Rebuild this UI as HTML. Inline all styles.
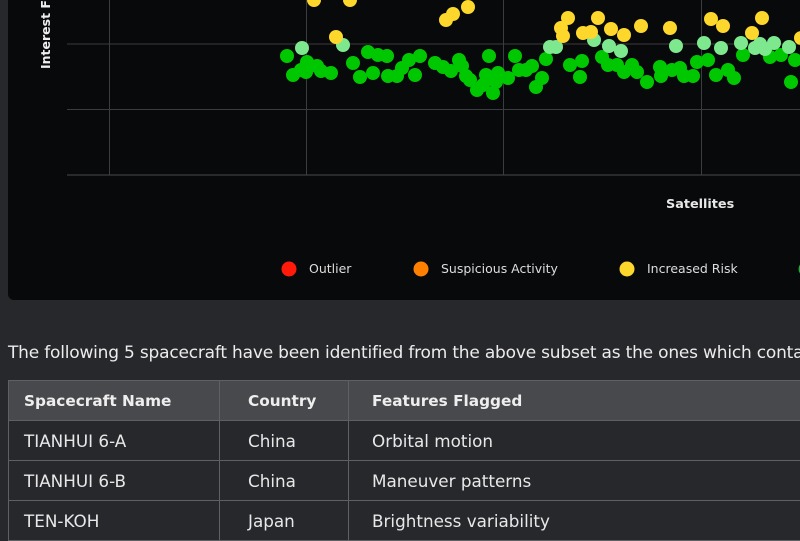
<!DOCTYPE html>
<html><head><meta charset="utf-8"><style>
*{margin:0;padding:0;box-sizing:border-box}
body{width:800px;height:533px;overflow:hidden;background:#27282b;font-family:"DejaVu Sans","Liberation Sans",sans-serif;color:#e8e8e8;position:relative}
.panel{position:absolute;left:8px;top:-10px;width:810px;height:310px;background:#08090b;border-radius:6px}
svg{position:absolute;left:0;top:0}
.p{position:absolute;left:8px;top:343px;font-size:17px;white-space:nowrap;color:#ececec;letter-spacing:-0.2px}
table{position:absolute;left:8px;top:380px;border-collapse:collapse;width:820px;font-size:16.8px}
th,td{border:1px solid #5f6063;height:40px;text-align:left;padding-left:15px;white-space:nowrap}
th{background:#48494c;font-weight:bold;color:#eee;font-size:15.3px}
td{background:#27282b;color:#e8e8e8}
th:first-child,td:first-child{width:211px}
th:nth-child(2),td:nth-child(2){width:129px;padding-left:28px}
th:nth-child(3),td:nth-child(3){padding-left:23px}
</style></head><body>
<div class="panel"></div>
<svg width="800" height="300" viewBox="0 0 800 300">
<g stroke="#3b3c3f" stroke-width="1">
<line x1="67" y1="44" x2="800" y2="44"/><line x1="67" y1="109.5" x2="800" y2="109.5"/><line x1="67" y1="175" x2="800" y2="175" stroke="#4a4b4e"/>
<line x1="109.5" y1="0" x2="109.5" y2="175"/><line x1="306.5" y1="0" x2="306.5" y2="175"/><line x1="503.5" y1="0" x2="503.5" y2="175"/><line x1="701.5" y1="0" x2="701.5" y2="175"/>
</g>
<text transform="translate(50,69) rotate(-90)" font-family="DejaVu Sans,sans-serif" font-weight="bold" font-size="12.5" fill="#eee">Interest F</text>
<text x="666" y="208" font-family="DejaVu Sans,sans-serif" font-weight="bold" font-size="12.8" fill="#e8e8e8">Satellites</text>
<g fill="#00c800">
<circle cx="287" cy="56" r="7"/><circle cx="293" cy="75" r="7"/><circle cx="301" cy="70" r="7"/><circle cx="307" cy="62" r="7"/><circle cx="306" cy="72" r="7"/><circle cx="317" cy="66" r="7"/><circle cx="321" cy="71" r="7"/><circle cx="331" cy="73" r="7"/><circle cx="353" cy="63" r="7"/><circle cx="360" cy="77" r="7"/><circle cx="368" cy="52" r="7"/><circle cx="373" cy="73" r="7"/><circle cx="378" cy="55" r="7"/><circle cx="387" cy="56" r="7"/><circle cx="388" cy="76" r="7"/><circle cx="397" cy="76" r="7"/><circle cx="402" cy="68" r="7"/><circle cx="409" cy="60" r="7"/><circle cx="415" cy="75" r="7"/><circle cx="420" cy="56" r="7"/><circle cx="435" cy="63" r="7"/><circle cx="443" cy="67" r="7"/><circle cx="451" cy="71" r="7"/><circle cx="459" cy="60" r="7"/><circle cx="462" cy="66" r="7"/><circle cx="466" cy="76" r="7"/><circle cx="470" cy="80" r="7"/><circle cx="477" cy="90" r="7"/><circle cx="483" cy="85" r="7"/><circle cx="486" cy="75" r="7"/><circle cx="489" cy="56" r="7"/><circle cx="493" cy="93" r="7"/><circle cx="496" cy="82" r="7"/><circle cx="498" cy="73" r="7"/><circle cx="508" cy="78" r="7"/><circle cx="515" cy="56" r="7"/><circle cx="519" cy="70" r="7"/><circle cx="526" cy="70" r="7"/><circle cx="532" cy="66" r="7"/><circle cx="536" cy="87" r="7"/><circle cx="542" cy="78" r="7"/><circle cx="546" cy="59" r="7"/><circle cx="570" cy="65" r="7"/><circle cx="580" cy="77" r="7"/><circle cx="582" cy="61" r="7"/><circle cx="602" cy="57" r="7"/><circle cx="608" cy="65" r="7"/><circle cx="617" cy="65" r="7"/><circle cx="632" cy="65" r="7"/><circle cx="637" cy="72" r="7"/><circle cx="647" cy="82" r="7"/><circle cx="660" cy="67" r="7"/><circle cx="661" cy="76" r="7"/><circle cx="672" cy="70" r="7"/><circle cx="680" cy="68" r="7"/><circle cx="684" cy="76" r="7"/><circle cx="693" cy="76" r="7"/><circle cx="697" cy="62" r="7"/><circle cx="708" cy="60" r="7"/><circle cx="716" cy="75" r="7"/><circle cx="734" cy="78" r="7"/><circle cx="743" cy="55" r="7"/><circle cx="770" cy="57" r="7"/><circle cx="781" cy="55" r="7"/><circle cx="791" cy="82" r="7"/><circle cx="795" cy="60" r="7"/><circle cx="728" cy="70" r="7"/><circle cx="624" cy="72" r="7"/>
</g>
<g fill="#7ee88f">
<circle cx="302" cy="48" r="7"/><circle cx="343" cy="45" r="7"/><circle cx="550" cy="47" r="7"/><circle cx="556" cy="47" r="7"/><circle cx="594" cy="40" r="7"/><circle cx="609" cy="46" r="7"/><circle cx="621" cy="51" r="7"/><circle cx="676" cy="46" r="7"/><circle cx="704" cy="43" r="7"/><circle cx="721" cy="48" r="7"/><circle cx="741" cy="43" r="7"/><circle cx="755" cy="48" r="7"/><circle cx="765" cy="49" r="7"/><circle cx="774" cy="43" r="7"/><circle cx="789" cy="47" r="7"/><circle cx="760" cy="44" r="7"/>
</g>
<g fill="#fdd72b">
<circle cx="314" cy="0" r="7"/><circle cx="350" cy="0" r="7"/><circle cx="336" cy="37" r="7"/><circle cx="446" cy="20" r="7"/><circle cx="453" cy="14" r="7"/><circle cx="468" cy="7" r="7"/><circle cx="561" cy="28" r="7"/><circle cx="568" cy="18" r="7"/><circle cx="563" cy="36" r="7"/><circle cx="583" cy="33" r="7"/><circle cx="591" cy="32" r="7"/><circle cx="598" cy="18" r="7"/><circle cx="611" cy="29" r="7"/><circle cx="624" cy="35" r="7"/><circle cx="641" cy="26" r="7"/><circle cx="670" cy="28" r="7"/><circle cx="711" cy="19" r="7"/><circle cx="723" cy="26" r="7"/><circle cx="752" cy="33" r="7"/><circle cx="762" cy="18" r="7"/><circle cx="801" cy="38" r="7"/>
</g>
<circle cx="289" cy="269" r="7.5" fill="#ff1a0a"/>
<circle cx="421" cy="269" r="7.5" fill="#ff8000"/>
<circle cx="627" cy="269" r="7.5" fill="#fdd72b"/>
<circle cx="806" cy="269" r="7.5" fill="#22aa33"/>
<g font-family="DejaVu Sans,sans-serif" font-size="12.5" fill="#ddd">
<text x="309" y="273">Outlier</text>
<text x="441" y="273">Suspicious Activity</text>
<text x="647" y="273">Increased Risk</text>
</g>
</svg>
<div class="p">The following 5 spacecraft have been identified from the above subset as the ones which contain</div>
<table>
<tr><th>Spacecraft Name</th><th>Country</th><th>Features Flagged</th></tr>
<tr><td>TIANHUI 6-A</td><td>China</td><td>Orbital motion</td></tr>
<tr><td>TIANHUI 6-B</td><td>China</td><td>Maneuver patterns</td></tr>
<tr><td>TEN-KOH</td><td>Japan</td><td>Brightness variability</td></tr>
</table>
</body></html>
